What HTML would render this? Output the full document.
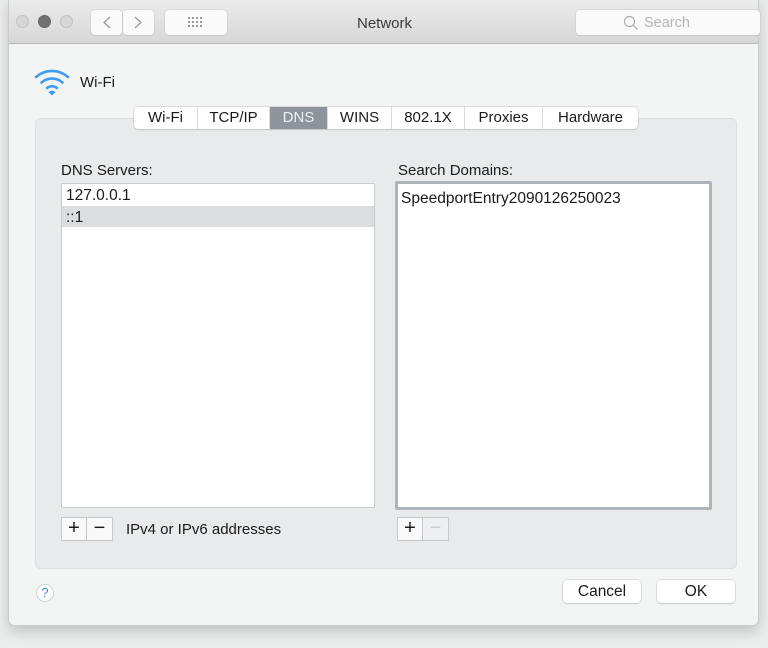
<!DOCTYPE html>
<html><head><style>
*{box-sizing:border-box;margin:0;padding:0}
body{width:768px;height:648px;background:#eceeee;font-family:"Liberation Sans",sans-serif;position:relative;overflow:hidden;color:#1a1a1a}
.win{position:absolute;left:8px;top:-2px;width:751px;height:628px;background:#f3f5f5;border:1px solid #c9cbcc;border-radius:0 0 6px 6px;box-shadow:0 6px 14px rgba(0,0,0,.18)}
.title{position:absolute;left:0;top:0;width:100%;height:45px;background:linear-gradient(#ececec,#d7d7d7);border-bottom:1px solid #b8b8b8}
.abs{position:absolute}
.dot{position:absolute;width:13px;height:13px;border-radius:50%;top:16px;background:#d6d6d6;border:1px solid #c2c2c2}
.btn{position:absolute;background:#fafafa;border-radius:4px;box-shadow:0 0 0 .5px #c8c8c8,0 1px 1px rgba(0,0,0,.1)}
.t{position:absolute;font-size:15px;white-space:nowrap}
.tabs{position:absolute;left:125px;top:108px;height:22px;display:flex;background:#fff;border-radius:4px;box-shadow:0 0 0 .5px #c0c0c0,0 1px 1px rgba(0,0,0,.15)}
.tabs div{height:22px;line-height:22px;font-size:15px;text-align:center;border-right:1px solid #dcdcdc}
.tabs .sel{background:#8d949b;color:#eef1f3}
.list{position:absolute;background:#fff;border:1px solid #c9cbcc}
.pm{position:absolute;height:24px;width:52px;display:flex;border:1px solid #c6c8c9;background:#f9f9f9}
.pm div{width:25px;height:22px;line-height:21px;text-align:center;font-size:20px;border-right:1px solid #c6c8c9}
.pb{position:absolute;top:581px;height:23px;background:#fff;border-radius:4px;box-shadow:0 0 0 .5px #c2c2c2,0 1px 1px rgba(0,0,0,.15);font-size:15.5px;text-align:center;line-height:23px}
</style></head><body>
<div class="win">
 <div class="title">
  <div class="dot" style="left:7px"></div>
  <div class="dot" style="left:29px;background:#727272;border-color:#666"></div>
  <div class="dot" style="left:51px"></div>
  <div class="btn" style="left:82px;top:11px;width:31px;height:25px"></div>
  <div class="btn" style="left:114px;top:11px;width:31px;height:25px"></div>
  <svg class="abs" style="left:82px;top:11px" width="64" height="25"><path d="M19 7l-6 5.5 6 5.5M44 7l6 5.5-6 5.5" fill="none" stroke="#9a9a9a" stroke-width="1.3"/></svg>
  <div class="btn" style="left:156px;top:11px;width:62px;height:25px"></div>
  <svg class="abs" style="left:178px;top:17px" width="18" height="12"><g fill="#999"><rect x="1" y="1" width="2" height="2"/><rect x="5" y="1" width="2" height="2"/><rect x="9" y="1" width="2" height="2"/><rect x="13" y="1" width="2" height="2"/><rect x="1" y="5" width="2" height="2"/><rect x="5" y="5" width="2" height="2"/><rect x="9" y="5" width="2" height="2"/><rect x="13" y="5" width="2" height="2"/><rect x="1" y="9" width="2" height="2"/><rect x="5" y="9" width="2" height="2"/><rect x="9" y="9" width="2" height="2"/><rect x="13" y="9" width="2" height="2"/></g></svg>
  <div class="t" style="left:0;width:751px;text-align:center;top:16px;color:#3a3a3a">Network</div>
  <div class="btn" style="left:567px;top:11px;width:184px;height:25px"></div>
  <svg class="abs" style="left:614px;top:16px" width="16" height="16"><circle cx="6.5" cy="6.5" r="5" fill="none" stroke="#b0b0b0" stroke-width="1.2"/><path d="M10 10l4.5 4.5" stroke="#b0b0b0" stroke-width="1.3"/></svg>
  <div class="t" style="left:635px;top:16px;color:#b5b5b5;font-size:14.5px">Search</div>
 </div>
 <svg class="abs" style="left:24px;top:68px" width="40" height="30"><g fill="none" stroke="#3e9df2" stroke-width="2.6" stroke-linecap="round"><path d="M3 10a24 24 0 0 1 32 0"/><path d="M8.5 15.5a16 16 0 0 1 21 0"/><path d="M14 21a8 8 0 0 1 10 0"/></g><path d="M15.5 25l3.5 3.5 3.5-3.5a5 5 0 0 0-7 0z" fill="#3e9df2"/></svg>
 <div class="t" style="left:71px;top:75px">Wi-Fi</div>
 <div class="abs" style="left:26px;top:119px;width:702px;height:451px;background:#e8eaeb;border:1px solid #dcdfe0;border-radius:5px"></div>
 <div class="tabs">
  <div style="width:64px">Wi-Fi</div><div style="width:72px">TCP/IP</div><div class="sel" style="width:58px">DNS</div><div style="width:64px">WINS</div><div style="width:73px">802.1X</div><div style="width:78px">Proxies</div><div style="width:95px;border-right:none">Hardware</div>
 </div>
 <div class="t" style="left:52px;top:163px">DNS Servers:</div>
 <div class="list" style="left:52px;top:184px;width:314px;height:325px">
  <div style="height:22px;line-height:24px;padding-left:4px;font-size:15.5px">127.0.0.1</div>
  <div style="height:21px;line-height:23px;padding-left:4px;font-size:15.5px;background:#dcdddf">::1</div>
 </div>
 <div class="t" style="left:389px;top:163px">Search Domains:</div>
 <div class="list" style="left:386px;top:182px;width:317px;height:329px;border:3px solid #aeb4b9;border-radius:2px">
  <div style="padding:6px 0 0 3px;font-size:15.5px">SpeedportEntry2090126250023</div>
 </div>
 <div class="pm" style="left:52px;top:518px"><div>+</div><div style="border:none">−</div></div>
 <div class="t" style="left:117px;top:522px;font-size:15px">IPv4 or IPv6 addresses</div>
 <div class="pm" style="left:388px;top:518px"><div>+</div><div style="border:none;color:#ccc;background:#eeeff0">−</div></div>
 <div class="abs" style="left:27px;top:585px;width:18px;height:18px;border-radius:50%;background:#fff;border:1px solid #cfd3d6;color:#3e8ae6;font-size:13px;text-align:center;line-height:16px">?</div>
 <div class="pb" style="left:554px;width:78px">Cancel</div>
 <div class="pb" style="left:648px;width:78px">OK</div>
</div>
</body></html>
